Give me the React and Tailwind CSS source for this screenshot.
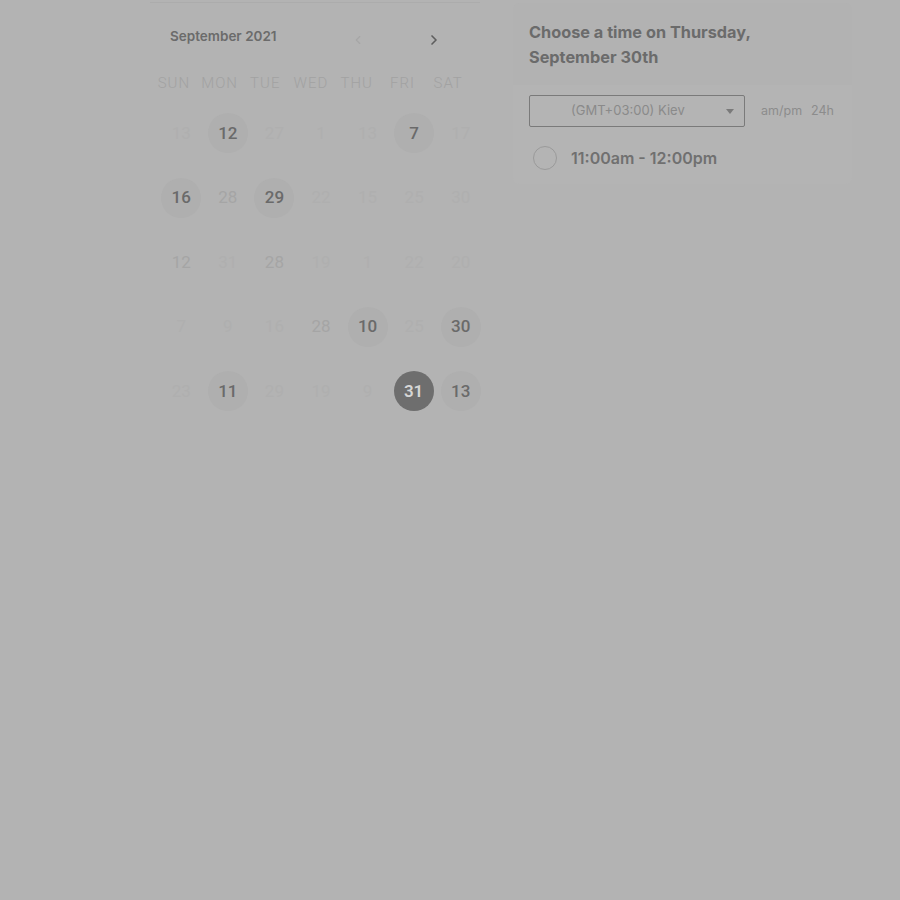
import React, { useState } from 'react';

// Calendar day cells: [label, kind] kind: 0 faint, 1 muted, 2 available, 3 selected
const weeks = [
    [['13', 0], ['12', 2], ['27', 0], ['1', 0], ['13', 0], ['7', 2], ['17', 0]],
    [['16', 2], ['28', 1], ['29', 2], ['22', 0], ['15', 0], ['25', 0], ['30', 0]],
    [['12', 1], ['31', 0], ['28', 1], ['19', 0], ['1', 0], ['22', 0], ['20', 0]],
    [['7', 0], ['9', 0], ['16', 0], ['28', 1], ['10', 2], ['25', 0], ['30', 2]],
    [['23', 0], ['11', 2], ['29', 0], ['19', 0], ['9', 0], ['31', 3], ['13', 2]],
];

const dayNames = ['SUN', 'MON', 'TUE', 'WED', 'THU', 'FRI', 'SAT'];

function DayCell({ label, kind }) {
    if (kind === 3) {
        return (
            <div className="flex items-center justify-center h-[64.5px]">
                <span className="w-10 h-10 -ml-[1px] rounded-full bg-[#6e6e6e] text-[#d6d6d6] flex items-center justify-center text-[17px] font-semibold">
                    {label}
                </span>
            </div>
        );
    }
    if (kind === 2) {
        return (
            <div className="flex items-center justify-center h-[64.5px]">
                <span className="w-10 h-10 rounded-full bg-[#afafaf] text-[#6a6a6a] flex items-center justify-center text-[17px] font-medium">
                    {label}
                </span>
            </div>
        );
    }
    return (
        <div className="flex items-center justify-center h-[64.5px]">
            <span className={`text-[17px] ${kind === 1 ? 'text-[#a5a5a5]' : 'text-[#afafaf]'}`}>{label}</span>
        </div>
    );
}

export default function App() {
    const [use24, setUse24] = useState(false);

    return (
        <div className="w-[900px] h-[900px] bg-[#b3b3b3] overflow-hidden" style={{ fontFamily: 'Inter, "Noto Sans", sans-serif' }}>
            <div className="flex items-start pl-[150px] gap-[18px]">
                {/* Calendar column */}
                <div className="w-[345px]">
                    <div className="h-[3px] border-b border-[#acacac] w-[330px]"></div>
                    <div className="flex items-center h-[66px] pl-[20px]">
                        <span className="text-[13.5px] font-semibold text-[#6b6b6b] w-[180px]">September 2021</span>
                        <span className="text-[#a6a6a6] ml-[1px] mt-[7px]">
                            <svg width="14" height="14" viewBox="0 0 24 24" fill="none" stroke="currentColor" strokeWidth="2" strokeLinecap="round" strokeLinejoin="round"><path d="M15 18l-6-6 6-6" /></svg>
                        </span>
                        <span className="text-[#5e5e5e] ml-[61px] mt-[7px]">
                            <svg width="16" height="16" viewBox="0 0 24 24" fill="none" stroke="currentColor" strokeWidth="2.5" strokeLinecap="round" strokeLinejoin="round"><path d="M9 18l6-6-6-6" /></svg>
                        </span>
                    </div>
                    <div className="ml-[8px] w-[326px]">
                        <div className="grid grid-cols-7 w-[320px] h-[28px] items-center -ml-[7px]" style={{ fontFamily: 'Roboto, sans-serif' }}>
                            {dayNames.map((d) => (
                                <div key={d} className="text-center text-[15px] font-light text-[#a2a2a2] tracking-[1px]">{d}</div>
                            ))}
                        </div>
                        <div className="mt-[4px]" style={{ fontFamily: 'Roboto, sans-serif' }}>
                            {weeks.map((w, i) => (
                                <div key={i} className="grid grid-cols-7">
                                    {w.map(([label, kind], j) => (
                                        <DayCell key={j} label={label} kind={kind} />
                                    ))}
                                </div>
                            ))}
                        </div>
                    </div>
                </div>

                {/* Time picker panel */}
                <div className="w-[339px] mt-[3px] rounded-[6px] bg-[#b4b4b4]">
                    <div className="px-[16px] pt-[17px] pb-[15px] rounded-t-[6px] bg-[#b2b2b2]">
                        <h2 className="text-[16.3px] font-bold text-[#6b6b6b] leading-[25px]">
                            Choose a time on Thursday,<br />September 30th
                        </h2>
                    </div>
                    <div className="px-[16px] pt-[10px] pb-[14px]">
                        <div className="flex items-center">
                            <div className="w-[216px] h-[32px] border border-[#7a7a7a] rounded-[2px] flex items-center pl-[41px] pr-[10px] justify-between">
                                <span className="text-[13px] text-[#8a8a8a]">(GMT+03:00) Kiev</span>
                                <svg width="8" height="5" viewBox="0 0 8 5"><path d="M0 0h8L4 5z" fill="#7a7a7a" /></svg>
                            </div>
                            <div className="ml-[16px] flex gap-[9px] text-[12.5px] text-[#8c8c8c]">
                                <button onClick={() => setUse24(false)} className={use24 ? '' : ''}>am/pm</button>
                                <button onClick={() => setUse24(true)}>24h</button>
                            </div>
                        </div>
                        <label className="flex items-center mt-[19px] ml-[4px]">
                            <span className="w-[24px] h-[24px] rounded-full border border-[#9a9a9a]"></span>
                            <span className="ml-[14px] text-[16px] font-semibold text-[#707070]">11:00am - 12:00pm</span>
                        </label>
                    </div>
                </div>
            </div>
        </div>
    );
}
